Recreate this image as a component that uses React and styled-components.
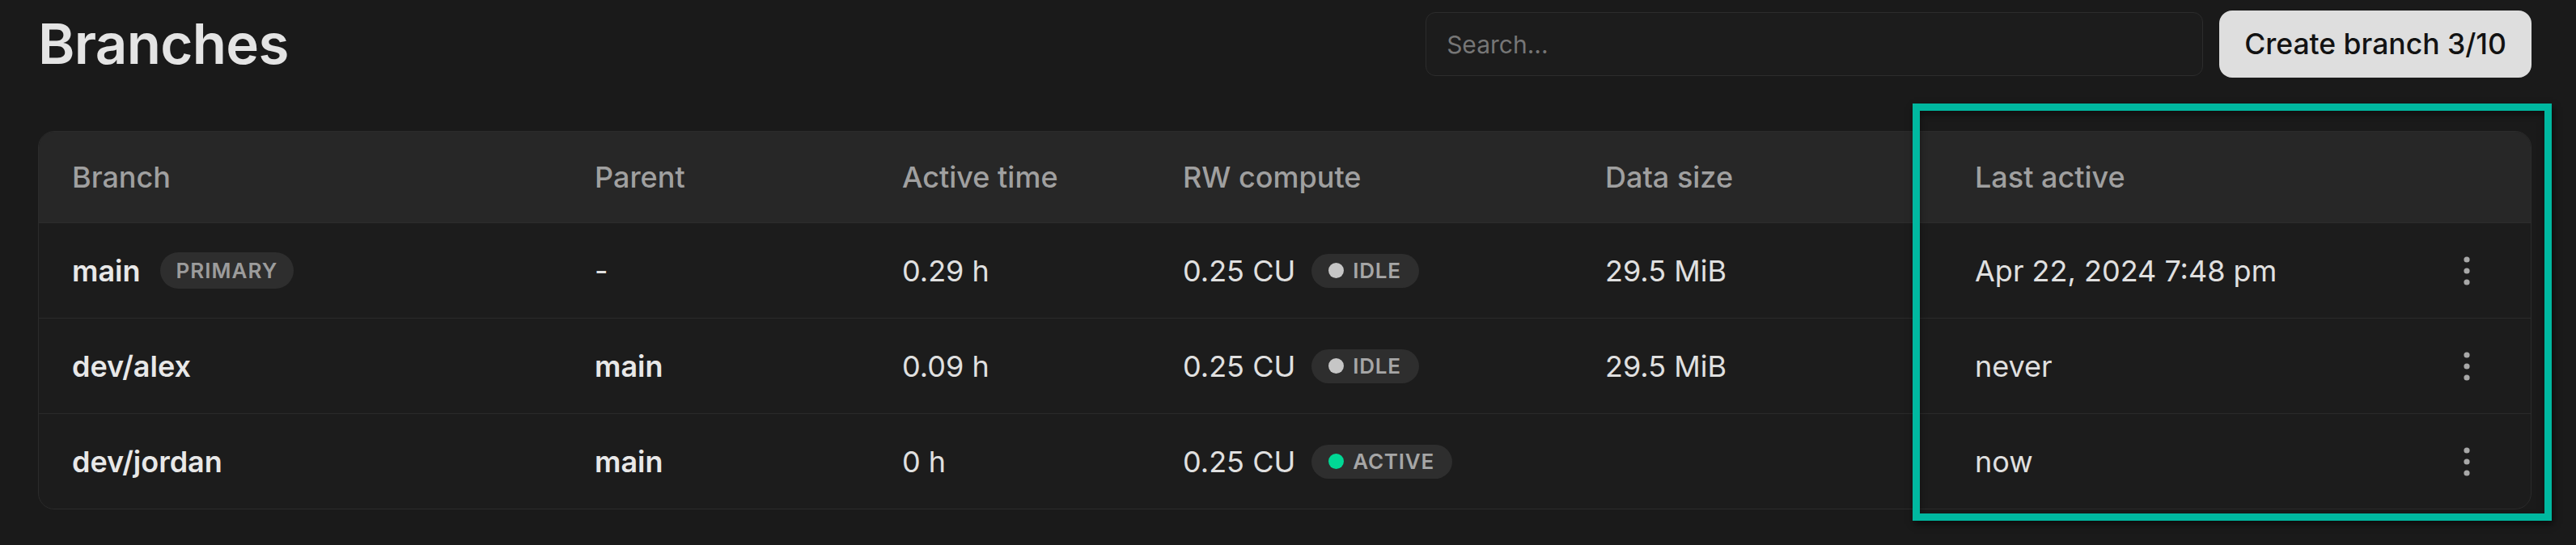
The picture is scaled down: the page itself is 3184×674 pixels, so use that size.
import React from "react";
import styled, { createGlobalStyle } from "styled-components";

const GlobalStyle = createGlobalStyle`
  html, body {
    margin: 0;
    padding: 0;
    background: #1a1a1a;
  }
  body {
    font-family: Inter, "Noto Sans", "Liberation Sans", sans-serif;
    color: #e4e4e4;
  }
  * { box-sizing: border-box; }
`;

const Page = styled.div`
  position: relative;
  width: 3184px;
  min-height: 674px;
  padding: 13px 55px 40px 47px;
`;

const TopBar = styled.div`
  display: flex;
  justify-content: space-between;
  align-items: center;
  height: 83px;
`;

const Title = styled.h1`
  margin: 0;
  font-size: 69px;
  font-weight: 600;
  letter-spacing: -0.01em;
  color: #e4e4e4;
  line-height: 1;
`;

const Actions = styled.div`
  display: flex;
  align-items: center;
  gap: 20px;
`;

const SearchInput = styled.input`
  width: 961px;
  height: 79px;
  border: 1px solid #2c2c2c;
  border-radius: 12px;
  background: #1c1c1c;
  padding: 0 25px;
  font-family: inherit;
  font-size: 30px;
  color: #e4e4e4;
  outline: none;
  &::placeholder {
    color: #767676;
  }
`;

const PrimaryButton = styled.button`
  height: 83px;
  padding: 0 31px;
  border: none;
  border-radius: 16px;
  background: #dedede;
  color: #121212;
  font-family: inherit;
  font-size: 35.5px;
  font-weight: 500;
  cursor: pointer;
`;

const Card = styled.div`
  position: relative;
  margin-top: 66px;
  border: 1px solid #2b2b2b;
  border-radius: 20px;
  background: #1c1c1c;
`;

const Grid = styled.div`
  display: grid;
  grid-template-columns: 646px 380px 347px 522px 457px 1fr 158px;
  align-items: center;
  padding-left: 41px;
`;

const HeaderRow = styled(Grid)`
  height: 113px;
  background: #272727;
  border-bottom: 1px solid #2d2d2d;
  border-radius: 19px 19px 0 0;
`;

const HeaderCell = styled.div`
  font-size: 36px;
  font-weight: 500;
  color: #a0a0a0;
`;

const Row = styled(Grid)`
  height: ${(p) => (p.$last ? "117px" : "118px")};
  border-bottom: ${(p) => (p.$last ? "none" : "1px solid #2a2a2a")};
`;

const Cell = styled.div`
  display: flex;
  align-items: center;
  gap: ${(p) => (p.$gap ? p.$gap : "0px")};
  font-size: 36px;
  font-weight: ${(p) => (p.$bold ? 600 : 400)};
  color: ${(p) => (p.$bold ? "#e8e8e8" : "#e0e0e0")};
  white-space: nowrap;
`;

const Tag = styled.span`
  display: inline-flex;
  align-items: center;
  height: 45px;
  padding: 0 20px;
  border-radius: 999px;
  background: #2e2e2e;
  color: #9c9c9c;
  font-size: 26px;
  font-weight: 600;
  letter-spacing: 0.04em;
`;

const Status = styled.span`
  display: inline-flex;
  align-items: center;
  gap: 11px;
  height: 42px;
  padding: 0 22px 0 21px;
  border-radius: 999px;
  background: #2e2e2e;
  color: #a6a6a6;
  font-size: 26px;
  font-weight: 600;
  letter-spacing: 0.03em;
`;

const Dot = styled.span`
  width: 19px;
  height: 19px;
  border-radius: 50%;
  background: ${(p) => (p.$active ? "#00d895" : "#c6c6c6")};
`;

const MenuCell = styled.div`
  display: flex;
  justify-content: center;
  align-items: center;
`;

const MenuButton = styled.button`
  display: flex;
  align-items: center;
  justify-content: center;
  padding: 0;
  border: none;
  background: transparent;
  cursor: pointer;
`;

const Highlight = styled.div`
  position: absolute;
  left: 2316px;
  top: -35px;
  width: 790px;
  height: 516px;
  border: 9px solid #00b8a0;
  pointer-events: none;
  box-shadow: 2px 4px 8px rgba(0, 0, 0, 0.55), inset 0 4px 8px rgba(0, 0, 0, 0.45);
`;

const DotsIcon = () => (
  <svg width="10" height="36" viewBox="0 0 10 36" aria-hidden="true">
    <circle cx="5" cy="4" r="3.6" fill="#a8a8a8" />
    <circle cx="5" cy="18" r="3.6" fill="#a8a8a8" />
    <circle cx="5" cy="32" r="3.6" fill="#a8a8a8" />
  </svg>
);

const rows = [
  {
    name: "main",
    primary: true,
    parent: "-",
    time: "0.29 h",
    status: "IDLE",
    size: "29.5 MiB",
    last: "Apr 22, 2024 7:48 pm",
  },
  {
    name: "dev/alex",
    parent: "main",
    time: "0.09 h",
    status: "IDLE",
    size: "29.5 MiB",
    last: "never",
  },
  {
    name: "dev/jordan",
    parent: "main",
    time: "0 h",
    status: "ACTIVE",
    size: "",
    last: "now",
  },
];

export default function App() {
  return (
    <>
      <GlobalStyle />
      <Page>
        <TopBar>
          <Title>Branches</Title>
          <Actions>
            <SearchInput placeholder="Search..." />
            <PrimaryButton>Create branch 3/10</PrimaryButton>
          </Actions>
        </TopBar>
        <Card>
          <HeaderRow>
            <HeaderCell>Branch</HeaderCell>
            <HeaderCell>Parent</HeaderCell>
            <HeaderCell>Active time</HeaderCell>
            <HeaderCell>RW compute</HeaderCell>
            <HeaderCell>Data size</HeaderCell>
            <HeaderCell>Last active</HeaderCell>
            <HeaderCell />
          </HeaderRow>
          {rows.map((r, i) => (
            <Row key={r.name} $last={i === rows.length - 1}>
              <Cell $bold $gap="24px">
                {r.name}
                {r.primary && <Tag>PRIMARY</Tag>}
              </Cell>
              <Cell $bold={r.parent !== "-"}>{r.parent}</Cell>
              <Cell>{r.time}</Cell>
              <Cell $gap="20px">
                0.25 CU
                <Status>
                  <Dot $active={r.status === "ACTIVE"} />
                  {r.status}
                </Status>
              </Cell>
              <Cell>{r.size}</Cell>
              <Cell>{r.last}</Cell>
              <MenuCell>
                <MenuButton aria-label="More">
                  <DotsIcon />
                </MenuButton>
              </MenuCell>
            </Row>
          ))}
          <Highlight />
        </Card>
      </Page>
    </>
  );
}
